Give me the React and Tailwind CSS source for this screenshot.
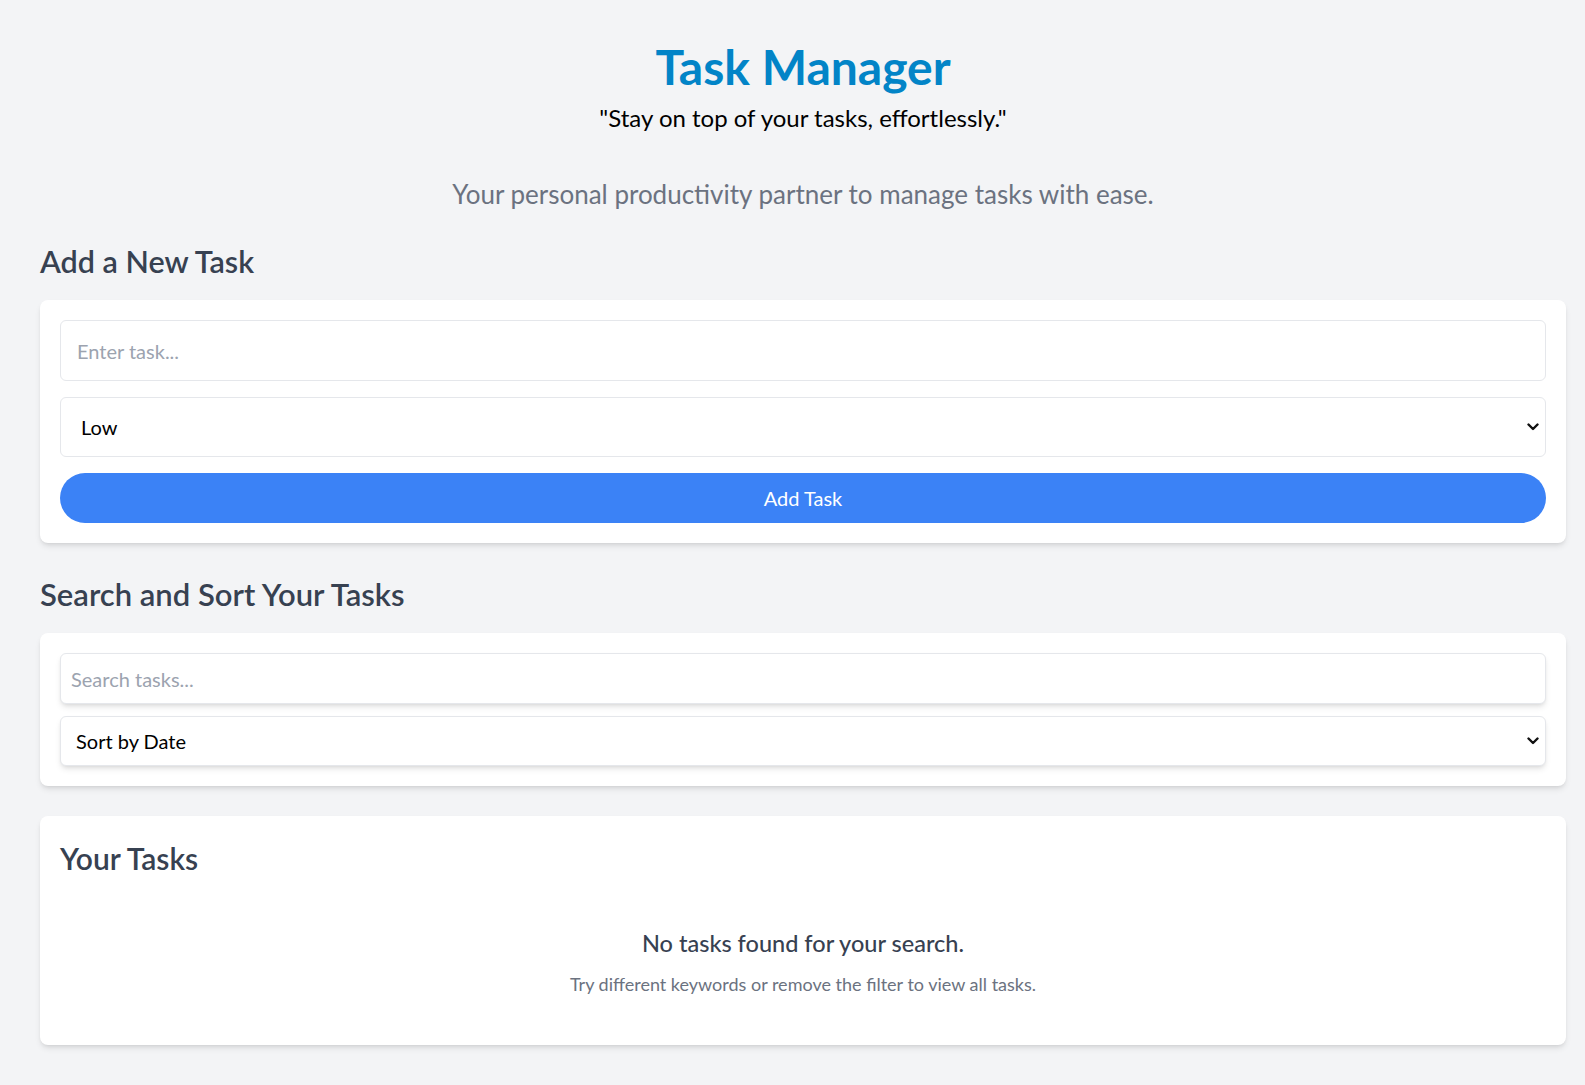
import React, { useState } from 'react';

const FONT = { fontFamily: '"Segoe UI", Lato, "Noto Sans", sans-serif' };

function Chevron() {
  return (
    <svg
      className="pointer-events-none absolute right-[7px] top-1/2 -translate-y-1/2"
      width="12"
      height="8"
      viewBox="0 0 12 8"
      fill="none"
    >
      <path d="M1.5 1.5L6 6l4.5-4.5" stroke="#111" strokeWidth="2.4" strokeLinecap="round" strokeLinejoin="round" />
    </svg>
  );
}

export default function App() {
  const [task, setTask] = useState('');
  const [priority, setPriority] = useState('Low');
  const [search, setSearch] = useState('');
  const [sort, setSort] = useState('date');

  return (
    <div className="min-h-screen bg-[#f3f4f6] pl-10 pr-[19px] pt-10 pb-10" style={FONT}>
      {/* Header */}
      <header className="text-center">
        <h1 className="pt-[3px] text-5xl font-bold text-[#0284c7] leading-none">Task Manager</h1>
        <p className="mt-[11px] text-2xl text-black">"Stay on top of your tasks, effortlessly."</p>
        <p className="mt-11 text-[26px] leading-8 text-[#6b7280]">
          Your personal productivity partner to manage tasks with ease.
        </p>
      </header>

      {/* Add task */}
      <h2 className="mt-[33px] text-[30.5px] leading-9 font-semibold text-[#374151]">Add a New Task</h2>
      <div className="mt-[21px] bg-white rounded-lg shadow-md p-5">
        <input
          value={task}
          onChange={(e) => setTask(e.target.value)}
          placeholder="Enter task..."
          className="block w-full h-[61px] px-4 text-xl border border-[#e5e7eb] rounded-md bg-white placeholder:text-[#9ca3af] outline-none"
        />
        <div className="relative mt-4">
          <select
            value={priority}
            onChange={(e) => setPriority(e.target.value)}
            className="block w-full h-[60px] pl-5 pr-8 text-xl text-black border border-[#e5e7eb] rounded-md bg-white appearance-none outline-none"
          >
            <option>Low</option>
            <option>Medium</option>
            <option>High</option>
          </select>
          <Chevron />
        </div>
        <button className="mt-4 w-full h-[50px] rounded-full bg-[#3b82f6] text-white text-xl">
          Add Task
        </button>
      </div>

      {/* Search and sort */}
      <h2 className="mt-[33px] text-[31px] leading-9 font-semibold text-[#374151]">Search and Sort Your Tasks</h2>
      <div className="mt-[21px] bg-white rounded-lg shadow-md p-5">
        <input
          value={search}
          onChange={(e) => setSearch(e.target.value)}
          placeholder="Search tasks..."
          className="block w-full h-[51px] px-[10px] text-xl border border-[#e5e7eb] rounded-md bg-white shadow-md placeholder:text-[#9ca3af] outline-none"
        />
        <div className="relative mt-3">
          <select
            value={sort}
            onChange={(e) => setSort(e.target.value)}
            className="block w-full h-[50px] pl-[15px] pr-8 text-xl text-black border border-[#e5e7eb] rounded-md bg-white shadow-md appearance-none outline-none"
          >
            <option value="date">Sort by Date</option>
            <option value="priority">Sort by Priority</option>
          </select>
          <Chevron />
        </div>
      </div>

      {/* Task list */}
      <div className="mt-[30px] bg-white rounded-lg shadow-md px-5 pt-6 pb-[47px]">
        <h2 className="text-3xl font-semibold text-[#374151]">Your Tasks</h2>
        <div className="pt-[51px] text-center">
          <p className="text-[23.5px] leading-8 font-medium text-[#374151]">No tasks found for your search.</p>
          <p className="mt-[11px] text-lg text-[#6b7280]">
            Try different keywords or remove the filter to view all tasks.
          </p>
        </div>
      </div>
    </div>
  );
}
